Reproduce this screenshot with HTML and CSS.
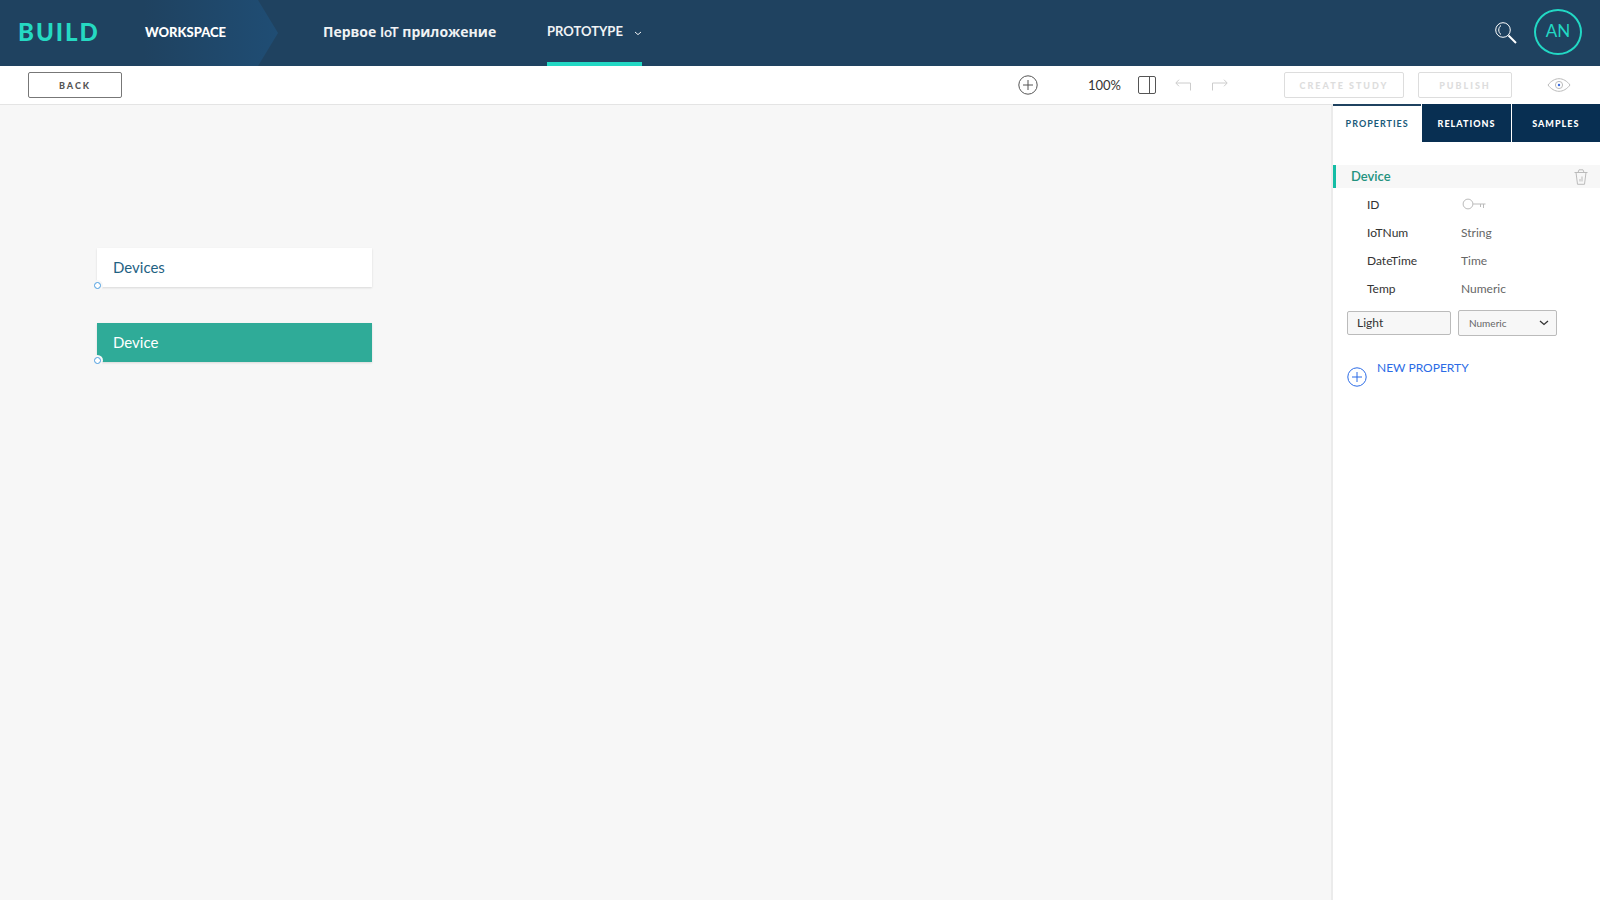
FILE: index.html
```html
<!DOCTYPE html>
<html lang="ru">
<head>
    <meta charset="UTF-8">
    <meta name="viewport" content="width=device-width, initial-scale=1.0">
    <title>Build - Prototype</title>
    <link rel="stylesheet" href="styles.css">
</head>
<body>
    <header class="top-bar">
        <a class="logo" href="#">BUILD</a>
        <a class="workspace" href="#">WORKSPACE</a>
        <a class="project" href="#">Первое <span lang="en">IoT</span> приложение</a>
        <button class="section-menu" type="button">
            PROTOTYPE
            <svg width="8" height="5" viewBox="0 0 8 5"><path d="M1 1l3 2.6L7 1"/></svg>
        </button>
        <button class="icon-btn search" type="button" aria-label="Search">
            <svg width="24" height="24" viewBox="0 0 24 24">
                <circle cx="9" cy="9" r="7.3"/>
                <path d="M7 4.5c-3 2-3 7 0 9"/>
                <path class="handle" d="M14.5 14.5l7.5 7.5"/>
            </svg>
        </button>
        <button class="avatar" type="button">AN</button>
    </header>

    <div class="toolbar">
        <button class="btn" type="button">BACK</button>
        <div class="tools">
            <button class="icon-btn" type="button" aria-label="Add">
                <svg width="20" height="20" viewBox="0 0 20 20"><circle cx="10" cy="10" r="9.2"/><path d="M10 5v10M5 10h10"/></svg>
            </button>
            <span class="zoom-level">100%</span>
            <button class="icon-btn panel-toggle" type="button" aria-label="Toggle panel">
                <svg width="18" height="18" viewBox="0 0 18 18"><rect x="0.5" y="0.5" width="17" height="17" rx="1.5"/><path d="M11.5 0.5v17"/></svg>
            </button>
            <button class="icon-btn undo" type="button" aria-label="Undo" disabled>
                <svg width="16" height="12" viewBox="0 0 16 12"><path d="M4 0.7L0.8 4 4 7.3M1 4h14.5v7.5"/></svg>
            </button>
            <button class="icon-btn redo" type="button" aria-label="Redo" disabled>
                <svg width="16" height="12" viewBox="0 0 16 12"><path d="M12 0.7L15.2 4 12 7.3M15 4H0.5v7.5"/></svg>
            </button>
        </div>
        <button class="btn study" type="button" disabled>CREATE STUDY</button>
        <button class="btn publish" type="button" disabled>PUBLISH</button>
        <button class="icon-btn preview" type="button" aria-label="Preview">
            <svg width="24" height="14" viewBox="0 0 24 14">
                <path d="M1 7C4 3 8 0.7 12 0.7S20 3 23 7c-3 4-7 6.3-11 6.3S4 11 1 7z"/>
                <circle cx="12" cy="7" r="3.6"/>
                <circle class="pupil" cx="12" cy="7" r="1.2"/>
            </svg>
        </button>
    </div>

    <div class="workarea">
        <main class="canvas">
            <div class="entity">Devices<span class="port"></span></div>
            <div class="entity selected">Device<span class="port"></span></div>
        </main>

        <aside class="side-panel">
            <div class="tabs">
                <button class="tab active" type="button">PROPERTIES</button>
                <button class="tab" type="button">RELATIONS</button>
                <button class="tab" type="button">SAMPLES</button>
            </div>

            <div class="panel-title">
                <h2>Device</h2>
                <button class="icon-btn delete" type="button" aria-label="Delete">
                    <svg width="14" height="16" viewBox="0 0 14 16">
                        <path d="M0.5 3.5h13M4 3.5L5 0.8h4l1 2.7M2 3.5l1.5 11.8h7L12 3.5M6 12.5V10M8 12.5V7.5"/>
                    </svg>
                </button>
            </div>

            <table class="properties">
                <tr>
                    <th scope="row">ID</th>
                    <td>
                        <svg width="24" height="12" viewBox="0 0 24 12"><circle cx="6" cy="6" r="4.9"/><path d="M11 6h12.5M18.5 6v3M21.5 6v4"/></svg>
                    </td>
                </tr>
                <tr><th scope="row">IoTNum</th><td>String</td></tr>
                <tr><th scope="row">DateTime</th><td>Time</td></tr>
                <tr><th scope="row">Temp</th><td>Numeric</td></tr>
            </table>

            <div class="edit-row">
                <input type="text" value="Light" aria-label="Property name">
                <div class="select-box">
                    <select aria-label="Property type">
                        <option>Numeric</option>
                        <option>String</option>
                        <option>Time</option>
                    </select>
                    <svg width="10" height="6" viewBox="0 0 10 6"><path d="M1 1l4 3.5L9 1"/></svg>
                </div>
            </div>

            <button class="new-property" type="button">
                <svg width="20" height="20" viewBox="0 0 20 20"><circle cx="10" cy="10" r="9.2"/><path d="M10 5v10M5 10h10"/></svg>
                <span>NEW PROPERTY</span>
            </button>
        </aside>
    </div>
</body>
</html>
```
FILE: styles.css
```css
* {
    margin: 0;
    padding: 0;
    box-sizing: border-box;
}

body {
    font-family: Lato, "Noto Sans", sans-serif;
    font-size: 12px;
    color: #333;
    display: flex;
    flex-direction: column;
    min-height: 100vh;
    background: #f7f7f7;
}

button {
    font-family: inherit;
    background: none;
    border: none;
    cursor: pointer;
}

a {
    text-decoration: none;
}

svg {
    display: block;
    fill: none;
    stroke: currentColor;
}

.icon-btn {
    flex: none;
    color: #555;
}

/* Header */
.top-bar {
    display: flex;
    align-items: stretch;
    height: 66px;
    background: #1f4260;
    color: #fff;
    padding: 0 18px;
    font-size: 13px;
    font-weight: 900;
    line-height: 64px;
}

.logo {
    width: 92px;
    color: #25d9c2;
    font-size: 24px;
    letter-spacing: 2px;
}

.workspace {
    width: 168px;
    padding-left: 35px;
    color: #fff;
    background: linear-gradient(90deg, #1f4260 20%, #1f4d74);
    clip-path: polygon(0 0, 148px 0, 100% 50%, 148px 100%, 0 100%);
}

.project {
    width: 166px;
    margin-left: 45px;
    color: #f0f2f4;
    font-family: "Open Sans", "Noto Sans", sans-serif;
    font-size: 14px;
    font-weight: bold;
    white-space: nowrap;
}

.project span {
    font-family: Lato, sans-serif;
}

.section-menu {
    display: flex;
    align-items: center;
    justify-content: space-between;
    width: 95px;
    margin-left: 58px;
    border-bottom: 4px solid #22d8c4;
    color: #f0f2f4;
    font-size: 13px;
    font-weight: bold;
}

.section-menu svg {
    margin-top: 4px;
}

.search {
    margin-left: auto;
    color: #fff;
}

.search .handle {
    stroke-width: 2;
}

.avatar {
    width: 48px;
    height: 46px;
    margin: 9px 0 0 16px;
    padding-bottom: 3px;
    border: 2px solid #22d8c4;
    border-radius: 50%;
    color: #22d8c4;
    font-size: 17px;
}

/* Toolbar */
.toolbar {
    display: flex;
    align-items: center;
    height: 38px;
    padding: 0 29px 0 28px;
    background: #fff;
}

.btn {
    width: 94px;
    height: 26px;
    border: 1px solid #777;
    border-radius: 2px;
    color: #555;
    font-size: 9px;
    font-weight: 900;
    letter-spacing: 2px;
}

.btn:disabled {
    border-color: #ddd;
    color: #ddd;
}

.tools {
    display: flex;
    align-items: center;
    margin-left: auto;
}

.zoom-level {
    width: 50px;
    margin-left: 50px;
    padding-bottom: 1px;
    font-size: 13px;
}

.undo {
    margin-left: 19px;
    color: #ccc;
}

.redo {
    margin-left: 21px;
    color: #ccc;
}

.study {
    width: 120px;
    margin-left: 56px;
}

.publish {
    margin-left: 14px;
}

.preview {
    margin-left: 35px;
    color: #bbb;
}

.preview .pupil {
    stroke: none;
    fill: #3c6ee0;
}

/* Canvas */
.workarea {
    display: flex;
    flex: 1;
}

.canvas {
    flex: 1;
    padding: 143px 97px;
    border-top: 1px solid #e4e4e4;
}

.entity {
    position: relative;
    width: 275px;
    height: 39px;
    margin-bottom: 36px;
    padding-left: 16px;
    background: #fff;
    box-shadow: 0 1px 2px rgba(0, 0, 0, 0.12);
    color: #1f6283;
    font-size: 15px;
    line-height: 38px;
}

.entity.selected {
    background: #2fab98;
    color: #fff;
}

.port {
    position: absolute;
    left: -3px;
    bottom: -2px;
    width: 7px;
    height: 7px;
    border: 1px solid #4a9de0;
    border-radius: 50%;
    background: #fff;
    box-shadow: 0 0 0 2px #f7f7f7;
}

/* Side panel */
.side-panel {
    width: 269px;
    border-left: 2px solid #ebebeb;
    background: #fff;
}

.tabs {
    display: flex;
    gap: 1px;
    height: 38px;
}

.tab {
    flex: 1;
    background: #082f52;
    color: #fff;
    font-size: 9px;
    font-weight: 900;
    letter-spacing: 1px;
}

.tab.active {
    border-top: 2px solid #1f4260;
    padding-bottom: 2px;
    background: #fff;
    color: #1a5a7a;
    font-weight: bold;
}

.panel-title {
    display: flex;
    align-items: center;
    justify-content: space-between;
    height: 23px;
    margin-top: 23px;
    padding: 0 12px 0 15px;
    border-left: 3px solid #14bda5;
    background: #f7f7f7;
    color: #23927f;
}

.panel-title h2 {
    padding-bottom: 2px;
    font-size: 13px;
    font-weight: 600;
}

.delete {
    color: #bbb;
}

.properties {
    width: 100%;
    margin-top: 2px;
    border-collapse: collapse;
    text-align: left;
}

.properties th {
    width: 128px;
    height: 28px;
    padding-left: 34px;
    font-weight: normal;
}

.properties td {
    color: #666;
}

.properties svg {
    margin-left: 1px;
    color: #bbb;
}

.edit-row {
    display: flex;
    align-items: center;
    gap: 7px;
    margin-top: 8px;
    padding-left: 14px;
}

.edit-row input,
.edit-row select {
    border: 1px solid #bbb;
    border-radius: 2px;
    background: #f7f7f7;
    color: #333;
    font-family: inherit;
}

.edit-row input {
    width: 104px;
    height: 24px;
    padding: 0 0 2px 9px;
    font-size: 12px;
}

.select-box {
    position: relative;
    color: #333;
}

.edit-row select {
    appearance: none;
    width: 99px;
    height: 26px;
    padding-left: 10px;
    color: #666;
    font-size: 10px;
}

.select-box svg {
    position: absolute;
    right: 8px;
    top: 10px;
    stroke-width: 1.3;
    pointer-events: none;
}

.new-property {
    display: flex;
    align-items: flex-end;
    gap: 10px;
    margin-top: 25px;
    padding-left: 14px;
    color: #2b6be6;
    font-size: 12px;
}

.new-property span {
    line-height: 14px;
    padding-bottom: 12px;
}
```
